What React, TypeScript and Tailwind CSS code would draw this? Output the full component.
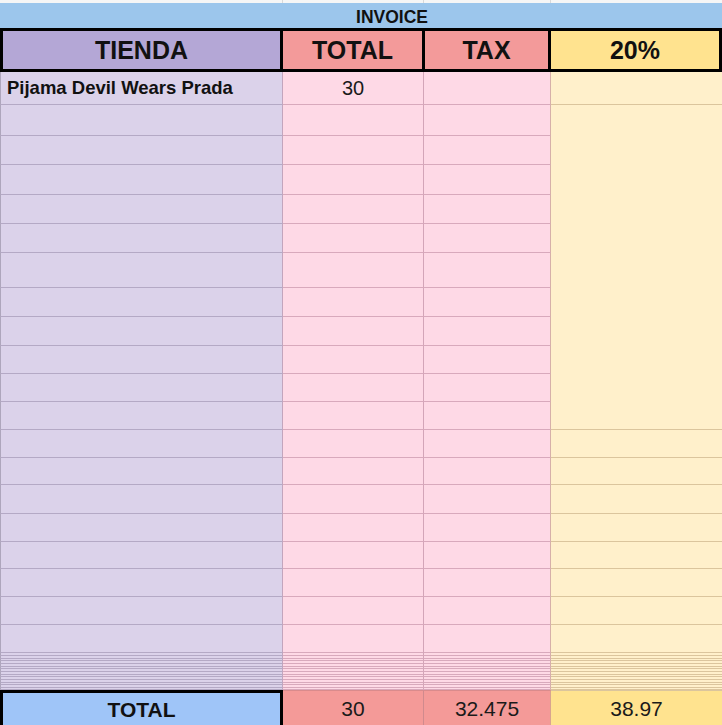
import React from "react";

// body row heights (px, each includes its 1px bottom rule)
const rows = [33, 31, 29, 30, 29, 29, 35, 29, 29, 28, 28, 28, 28, 27, 29, 28, 27, 28, 28, 28];
// the squashed rows just above the total line
const thinRows = [3, 3, 2, 3, 3, 2, 3, 3, 2, 3, 3, 2, 3, 2];

function BodyRow({ h, first, merged }: { h: number; first?: boolean; merged?: boolean }) {
  return (
    <div className="flex" style={{ height: h }}>
      <div className="w-[283px] shrink-0 flex items-center bg-[#dbd2ea] border-l border-l-[#aea6bc] border-r border-r-[#c3a5bd] border-b border-b-[#b4a9c5] pl-[6px]">
        {first && (
          <span className="text-[18.5px] font-bold text-[#111] leading-none">Pijama Devil Wears Prada</span>
        )}
      </div>
      <div className="w-[141px] shrink-0 flex items-center justify-center bg-[#fed9e6] border-r border-r-[#d3a5b8] border-b border-b-[#d8a9bc]">
        {first && <span className="text-[20px] text-[#1a1a1a] leading-none">30</span>}
      </div>
      <div className="w-[127px] shrink-0 bg-[#fed9e6] border-r border-r-[#d6b0a9] border-b border-b-[#d8a9bc]" />
      <div className={`flex-1 bg-[#fff0cb] ${merged ? "" : "border-b border-b-[#dbc59d]"}`} />
    </div>
  );
}

export default function App() {
  return (
    <div className="w-[722px] h-[725px] overflow-hidden bg-white font-['Liberation_Sans',Arial,sans-serif]">
      {/* ── top sliver of the previous row ─────────────────────────── */}
      <div className="flex h-[3px] bg-[#f6f6f6]">
        <div className="w-[283px] shrink-0 border-r border-r-[#d9d9d9]" />
        <div className="w-[141px] shrink-0 border-r border-r-[#d9d9d9]" />
        <div className="w-[127px] shrink-0 border-r border-r-[#d9d9d9]" />
        <div className="flex-1" />
      </div>

      {/* ── INVOICE band ───────────────────────────────────────────── */}
      <div className="h-[25px] bg-[#9cc6ec] flex items-center justify-center pl-[62px] pt-[4px]">
        <span className="text-[17.5px] font-bold text-[#111] leading-none">INVOICE</span>
      </div>

      {/* ── header row ─────────────────────────────────────────────── */}
      <div className="h-[44px] bg-black p-[3px] flex gap-[3px]">
        <div className="w-[277px] shrink-0 bg-[#b4a7d6] flex items-center justify-center">
          <span className="text-[25px] font-bold text-[#111] leading-none">TIENDA</span>
        </div>
        <div className="w-[139px] shrink-0 bg-[#f39a9a] flex items-center justify-center">
          <span className="text-[25px] font-bold text-[#111] leading-none">TOTAL</span>
        </div>
        <div className="w-[123px] shrink-0 bg-[#f39a9a] flex items-center justify-center">
          <span className="text-[25px] font-bold text-[#111] leading-none">TAX</span>
        </div>
        <div className="flex-1 bg-[#ffe38f] flex items-center justify-center">
          <span className="text-[25px] font-bold text-[#111] leading-none">20%</span>
        </div>
      </div>

      {/* ── body rows ──────────────────────────────────────────────── */}
      {rows.map((h, i) => (
        <BodyRow key={i} h={h} first={i === 0} merged={i >= 1 && i <= 10} />
      ))}
      {thinRows.map((h, i) => (
        <BodyRow key={`t${i}`} h={h} />
      ))}

      {/* ── total row ──────────────────────────────────────────────── */}
      <div className="flex h-[35px]">
        <div className="w-[283px] shrink-0 bg-[#9fc5f8] border-[3px] border-b-0 border-black flex items-center justify-center">
          <span className="text-[21px] font-bold text-[#111] leading-none">TOTAL</span>
        </div>
        <div className="w-[141px] shrink-0 bg-[#f49a98] border-t border-t-[#d98b8c] border-r border-r-[#d08a8d] flex items-center justify-center">
          <span className="text-[21px] text-[#1a1a1a] leading-none">30</span>
        </div>
        <div className="w-[127px] shrink-0 bg-[#f49a98] border-t border-t-[#d98b8c] border-r border-r-[#d9a48f] flex items-center justify-center">
          <span className="text-[21px] text-[#1a1a1a] leading-none">32.475</span>
        </div>
        <div className="flex-1 bg-[#ffe38f] border-t border-t-[#dbc59d] flex items-center justify-center">
          <span className="text-[21px] text-[#1a1a1a] leading-none">38.97</span>
        </div>
      </div>
    </div>
  );
}
